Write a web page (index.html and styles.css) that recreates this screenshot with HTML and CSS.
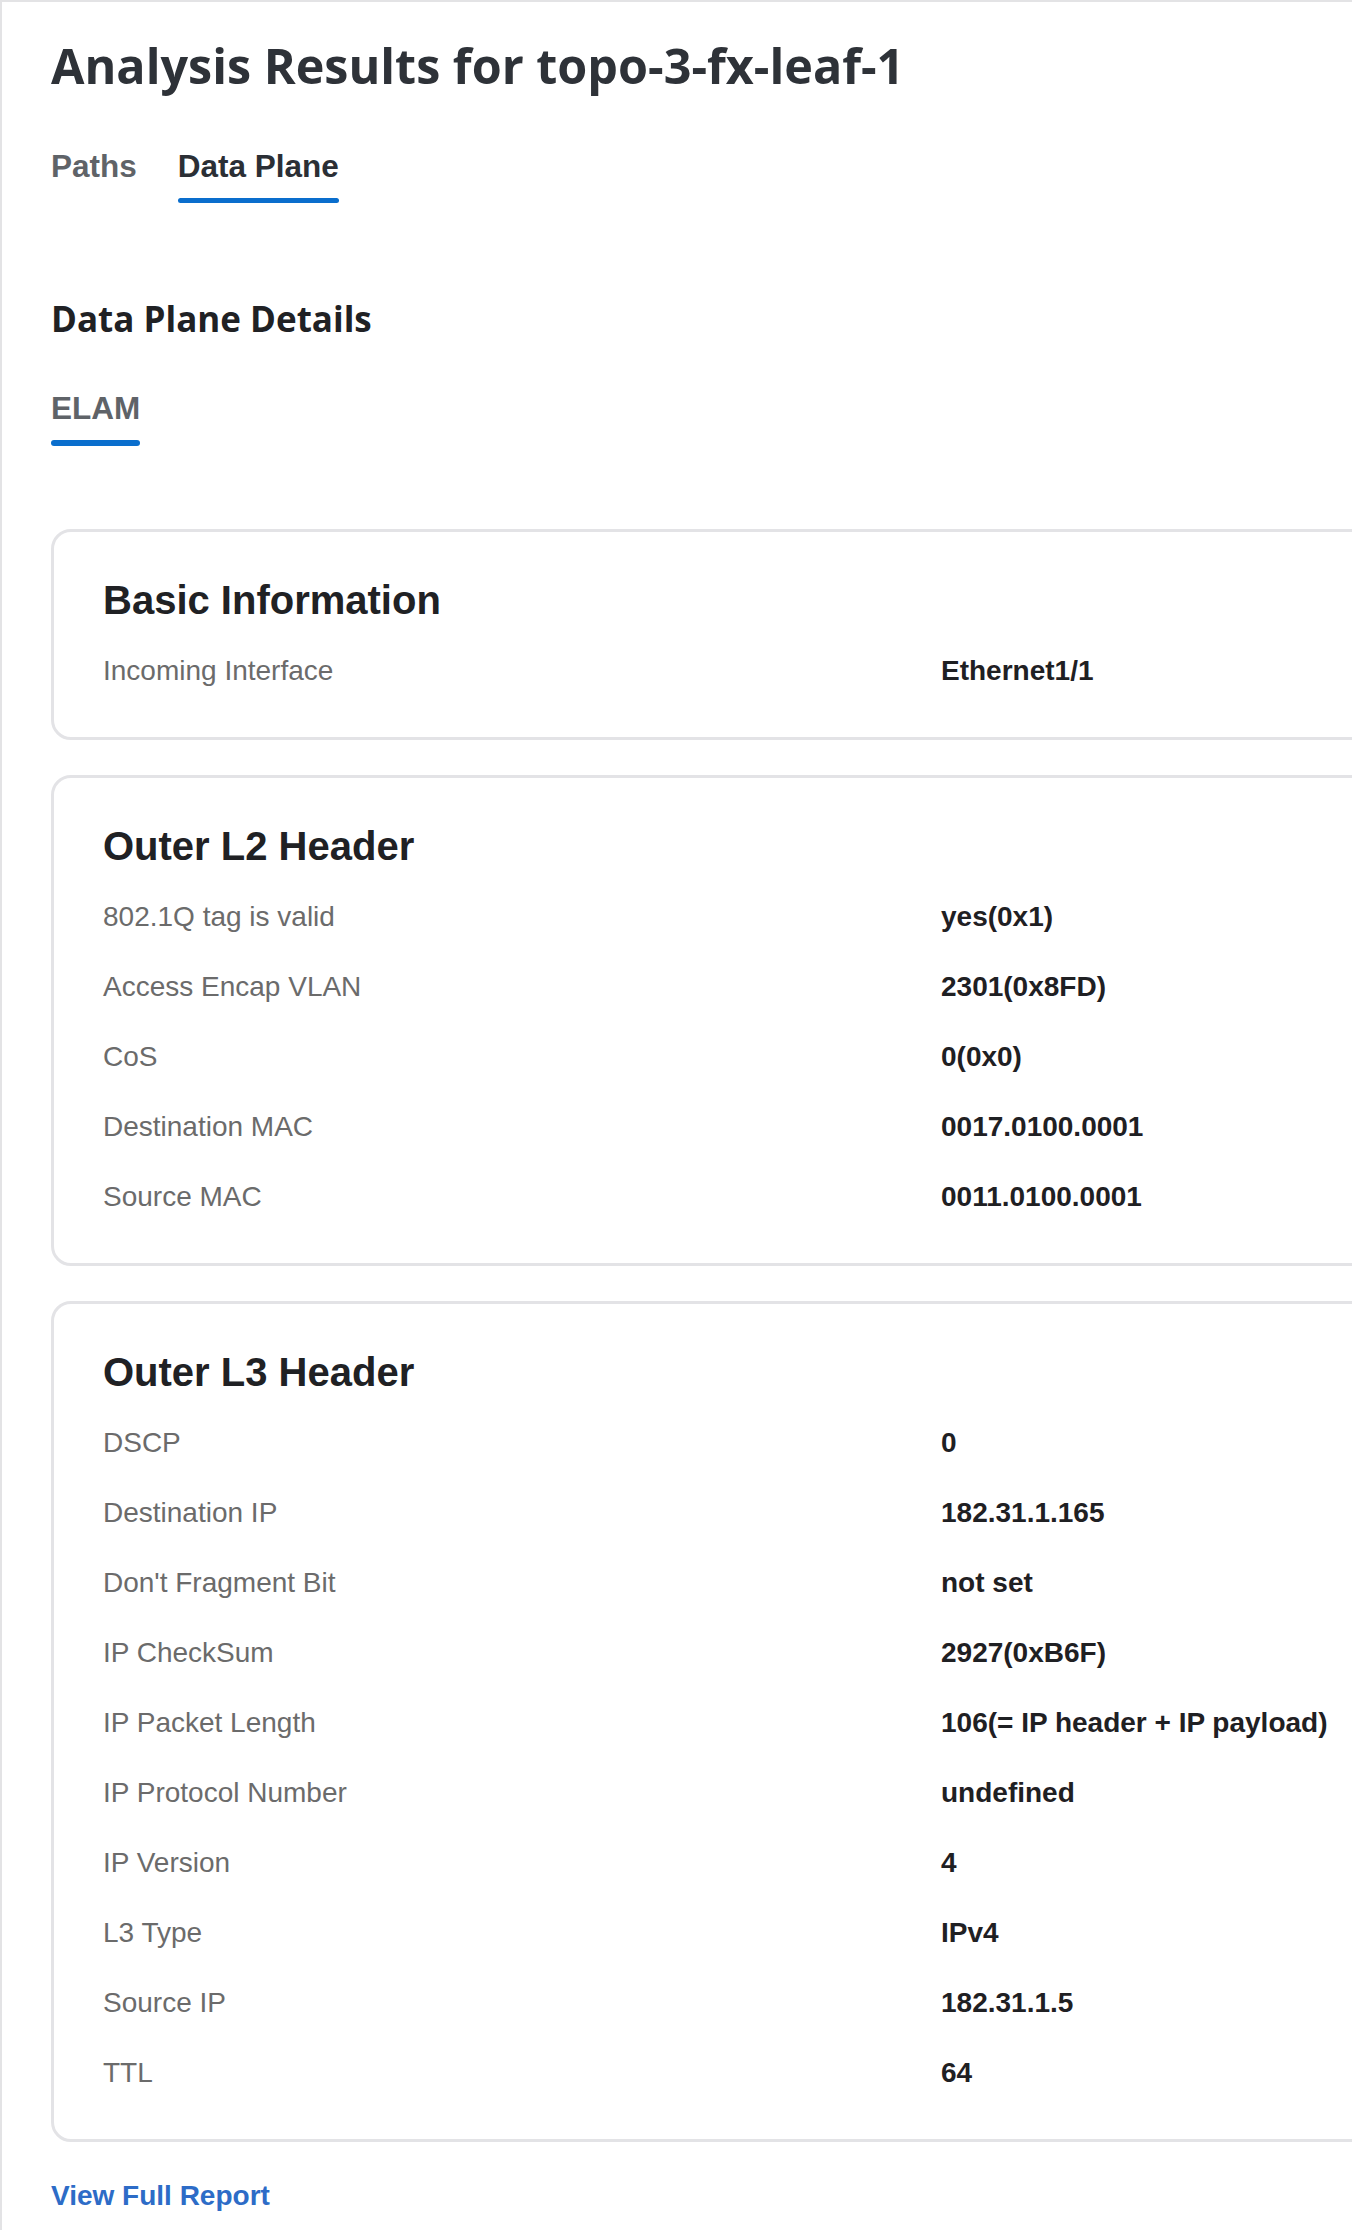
FILE: index.html
```html
<!DOCTYPE html>
<html lang="en">
<head>
    <meta charset="UTF-8">
    <meta name="viewport" content="width=device-width, initial-scale=1.0">
    <title>Analysis Results for topo-3-fx-leaf-1</title>
    <link rel="stylesheet" href="styles.css">
</head>
<body>
    <div class="page">
        <h1 class="page-title">Analysis Results for topo-3-fx-leaf-1</h1>

        <nav class="tabs">
            <span class="tab">Paths</span>
            <span class="tab active">Data Plane</span>
        </nav>

        <h2 class="section-title">Data Plane Details</h2>

        <nav class="tabs sub-tabs">
            <span class="tab active">ELAM</span>
        </nav>

        <div class="card">
            <h3 class="card-title">Basic Information</h3>
            <div class="row"><span class="label">Incoming Interface</span><span class="value">Ethernet1/1</span></div>
        </div>

        <div class="card">
            <h3 class="card-title">Outer L2 Header</h3>
            <div class="row"><span class="label">802.1Q tag is valid</span><span class="value">yes(0x1)</span></div>
            <div class="row"><span class="label">Access Encap VLAN</span><span class="value">2301(0x8FD)</span></div>
            <div class="row"><span class="label">CoS</span><span class="value">0(0x0)</span></div>
            <div class="row"><span class="label">Destination MAC</span><span class="value">0017.0100.0001</span></div>
            <div class="row"><span class="label">Source MAC</span><span class="value">0011.0100.0001</span></div>
        </div>

        <div class="card">
            <h3 class="card-title">Outer L3 Header</h3>
            <div class="row"><span class="label">DSCP</span><span class="value">0</span></div>
            <div class="row"><span class="label">Destination IP</span><span class="value">182.31.1.165</span></div>
            <div class="row"><span class="label">Don't Fragment Bit</span><span class="value">not set</span></div>
            <div class="row"><span class="label">IP CheckSum</span><span class="value">2927(0xB6F)</span></div>
            <div class="row"><span class="label">IP Packet Length</span><span class="value">106(= IP header + IP payload)</span></div>
            <div class="row"><span class="label">IP Protocol Number</span><span class="value">undefined</span></div>
            <div class="row"><span class="label">IP Version</span><span class="value">4</span></div>
            <div class="row"><span class="label">L3 Type</span><span class="value">IPv4</span></div>
            <div class="row"><span class="label">Source IP</span><span class="value">182.31.1.5</span></div>
            <div class="row"><span class="label">TTL</span><span class="value">64</span></div>
        </div>

        <a class="report-link" href="#">View Full Report</a>
    </div>
</body>
</html>
```

FILE: styles.css
```css
body {
    margin: 0;
    overflow: hidden;
    background-color: #ffffff;
    font-family: "Liberation Sans", Arial, sans-serif;
    color: #202124;
}

.page {
    width: 1780px;
    padding: 34px 49px 40px;
    border-top: 2px solid #e3e3e5;
    border-left: 2px solid #e3e3e5;
}

.page-title {
    margin: 0;
    font-family: "Open Sans", "Liberation Sans", sans-serif;
    font-weight: 700;
    font-size: 48.5px;
    line-height: 58px;
    color: #2e3238;
}

.tabs {
    display: flex;
    gap: 41px;
    margin-top: 54px;
}

.tab {
    display: flex;
    flex-direction: column;
    gap: 14px;
    font-weight: 700;
    font-size: 31.5px;
    line-height: 36px;
    color: #5f6368;
}

.tab::after {
    content: '';
    height: 5px;
    border-radius: 3px;
    background-color: transparent;
}

.tab.active {
    color: #2b2f35;
}

.tab.active::after {
    background-color: #0a6ecd;
}

.section-title {
    margin: 96px 0 0;
    font-family: "Open Sans", "Liberation Sans", sans-serif;
    font-weight: 700;
    font-size: 35px;
    line-height: 40px;
    color: #202124;
}

.sub-tabs {
    margin-top: 51px;
}

.sub-tabs .tab.active {
    color: #5f6368;
}

.sub-tabs .tab::after {
    height: 6px;
}

.card {
    margin-top: 35px;
    padding: 45px 49px 31px;
    border: 3px solid #e3e3e6;
    border-radius: 20px;
}

.sub-tabs + .card {
    margin-top: 83px;
}

.card-title {
    margin: 0 0 13px;
    font-size: 40px;
    line-height: 46px;
    font-weight: 700;
    color: #202124;
}

.row {
    display: grid;
    grid-template-columns: 1fr 1fr;
    font-size: 28px;
    line-height: 70px;
}

.label {
    color: #6b6b6b;
}

.value {
    font-weight: 700;
    color: #1f2023;
}

.report-link {
    display: inline-block;
    margin-top: 38px;
    font-size: 28px;
    line-height: 32px;
    font-weight: 700;
    color: #2d6cc7;
    text-decoration: none;
}
```
